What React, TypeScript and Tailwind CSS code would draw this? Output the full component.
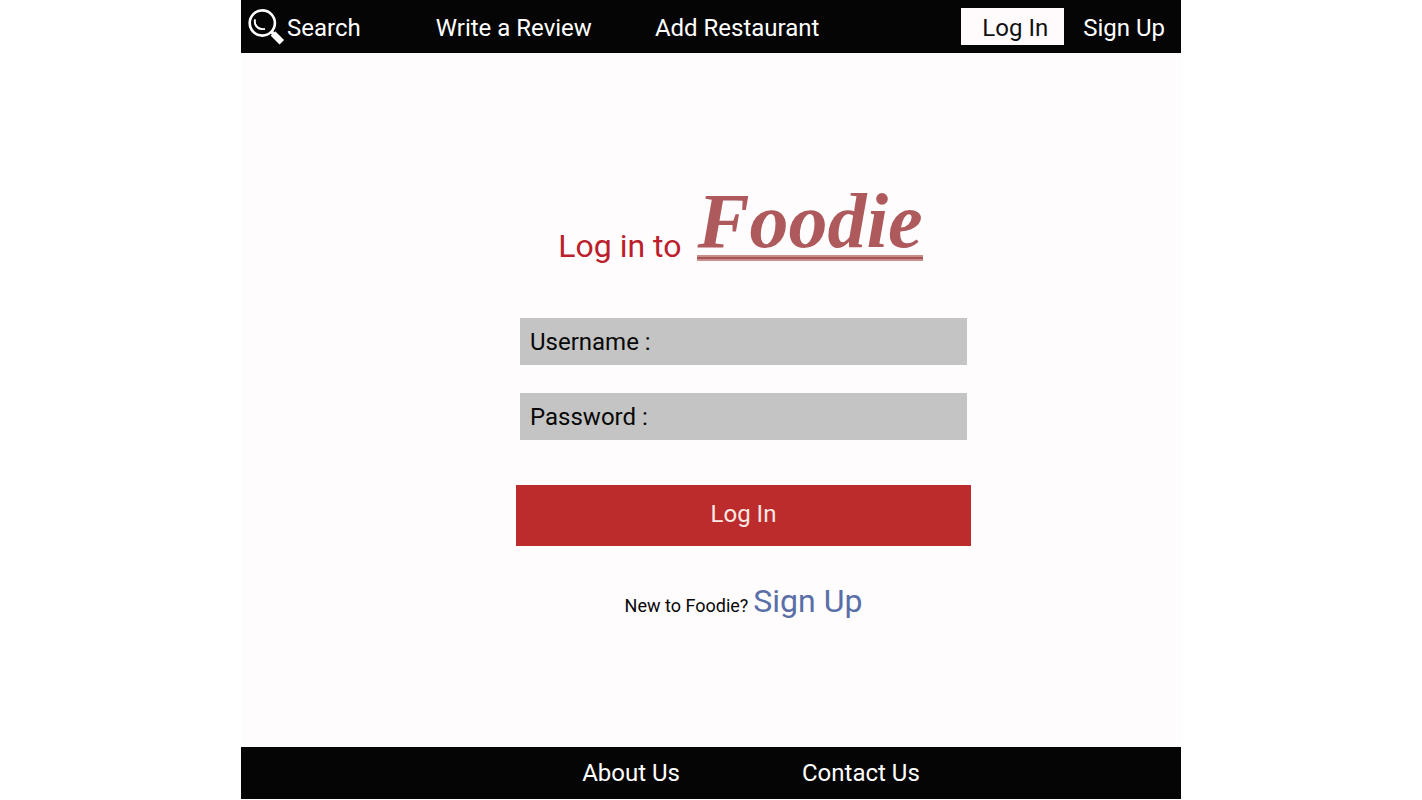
import React from "react";

function SearchIcon() {
  return (
    <svg viewBox="0 0 38 38" className="size-[38px] shrink-0" fill="none" stroke="#ffffff" aria-hidden="true">
      <circle cx="15.300" cy="14" r="12.600" strokeWidth="2.600" />
      <path d="M8 10.500C7 14 9 20.500 18 20" strokeWidth="1.800" />
      <path d="M8 10.500C7.500 16 11 19 15 20.300C10.500 21 6.500 17 8 10.500Z" strokeWidth="0.800" fill="#ffffff" />
      <path d="M24 22.500l3 3" strokeWidth="3.400" />
      <path d="M26 24.500l8.800 8.800" strokeWidth="6.400" />
    </svg>
  );
}

function Header() {
  return (
    <header className="flex h-[53px] items-center bg-[#050505] pr-4 pl-[6px] text-2xl text-white">
      <nav className="flex flex-1 items-center pt-[2px]">
        <a href="#search" className="flex items-center gap-[2px]">
          <SearchIcon />
          Search
        </a>
        <a href="#review" className="ml-[75px]">Write a Review</a>
        <a href="#restaurant" className="ml-[63px]">Add Restaurant</a>
      </nav>
      <a href="#login" className="flex h-[37px] items-center bg-[#fffbfc] pt-[2px] pr-4 pl-[21px] text-[#111111]">
        Log In
      </a>
      <a href="#signup" className="ml-[19px] pt-[2px]">Sign Up</a>
    </header>
  );
}

function Logo() {
  return (
    <div className="flex flex-col">
      <span className="font-['Liberation_Serif',serif] text-[78px] leading-[68px] font-bold text-[#ae5a5c] italic">
        Foodie
      </span>
      <span className="h-[6px] border-y-2 border-[#c98f88] bg-[#a55555]" />
    </div>
  );
}

function Field({ id, label, type }: { id: string; label: string; type: string }) {
  return (
    <div className="mx-1 flex h-[47px] items-center bg-[#c4c4c4] pl-[10px] text-2xl text-[#080808]">
      <label htmlFor={id} className="shrink-0">{label}</label>
      <input id={id} name={id} type={type} className="h-full min-w-0 flex-1 bg-transparent px-3 outline-none" />
    </div>
  );
}

export default function App() {
  return (
    <div className="min-h-screen bg-white pb-px font-['Roboto',sans-serif]">
      <div className="mx-auto flex min-h-[calc(100vh-1px)] max-w-[940px] flex-col bg-[#fefcfd]">
        <Header />
        <main className="flex flex-1 flex-col items-center pt-[134px] pl-[65px]">
          <h1 className="flex items-end gap-4 pr-[6px] text-[32px] leading-[30px] text-[#bb1f2c]">
            <span>Log in to</span>
            <Logo />
          </h1>
          <form className="mt-[57px] flex w-full max-w-[455px] flex-col" onSubmit={(e) => e.preventDefault()}>
            <div className="flex flex-col gap-7">
              <Field id="username" label="Username :" type="text" />
              <Field id="password" label="Password :" type="password" />
            </div>
            <button type="submit" className="mt-[45px] h-[61px] bg-[#bc2c2d] pb-1 text-2xl text-[#fbe9e4]">
              Log In
            </button>
          </form>
          <p className="mt-[35px] flex items-baseline gap-[5px] text-lg text-[#080808]">
            New to Foodie?
            <a href="#signup" className="text-[32px] leading-10 text-[#5a6fa8]">Sign Up</a>
          </p>
        </main>
        <footer className="flex h-[52px] items-center justify-center gap-[122px] bg-[#050505] pl-20 text-2xl text-white">
          <a href="#about">About Us</a>
          <a href="#contact">Contact Us</a>
        </footer>
      </div>
    </div>
  );
}
